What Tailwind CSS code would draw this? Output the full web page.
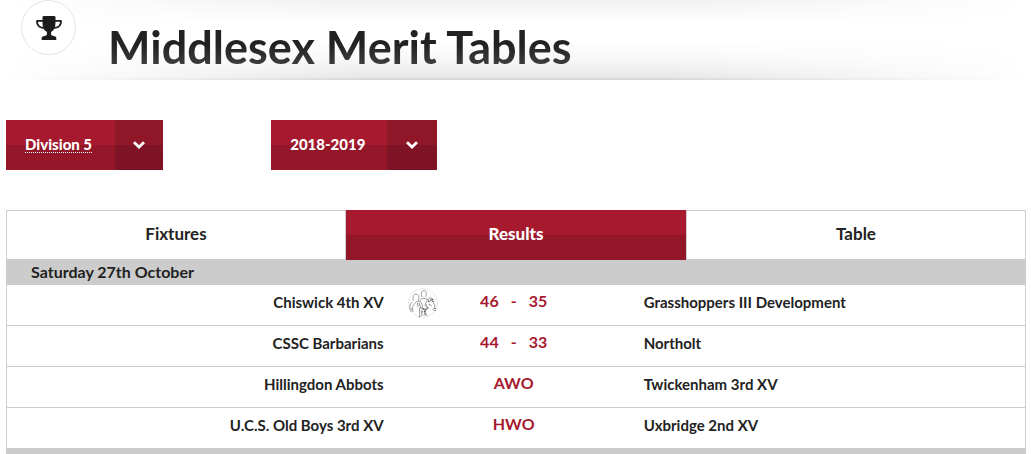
<!DOCTYPE html>
<html lang="en">
<head>
<meta charset="utf-8">
<meta name="viewport" content="width=device-width, initial-scale=1">
<title>Middlesex Merit Tables</title>
<script src="https://cdn.jsdelivr.net/npm/@tailwindcss/browser@4"></script>
</head>
<body class="overflow-x-hidden bg-white font-['Lato',sans-serif] font-bold text-[#222]">
<div class="pr-[5px] pl-[6px]">
  <header class="flex h-20 items-start bg-[linear-gradient(90deg,#fff,#fff0_35%,#fff0_65%,#fff),linear-gradient(0deg,#d4d4d4,#e8e8e8_3px,#ededed_8px,#f8f8f8_22px,#fff_38px,#fff_58px,#f0f0f0)] pl-[15px]">
    <span class="flex size-[55px] shrink-0 items-center justify-center rounded-full border border-[#e4e4e4] bg-white">
      <svg class="size-7" viewBox="0 0 28 28" fill="#1c1c1c" aria-hidden="true">
        <path d="M7.500 3Q7.500 2 9 2h10q1.500 0 1.500 1v3h5.200q1.200 0 1.200 1.200c0 4.500-2.800 7.200-7.500 7.500-.8 1.500-2.300 2.500-3.300 3.200v2.600q0 .9 1.800 1.300l2.400.6q1 .3 1 1.200V26H6.700v-2.400q0-.9 1-1.200l2.400-.6q1.800-.4 1.800-1.300v-2.600c-1-.7-2.500-1.700-3.300-3.200C3.900 14.400 1.100 11.700 1.100 7.200Q1.100 6 2.300 6h5.200zM2.900 7.700c.2 3 2 5 5.100 5.300-.4-1.700-.5-3.500-.5-5.300zM25.100 7.700h-4.600c0 1.800-.1 3.600-.5 5.300 3.100-.3 4.900-2.300 5.100-5.300z" fill-rule="evenodd"/>
      </svg>
    </span>
    <h1 class="bg-linear-to-b from-[#222] from-60% to-[#4a4a4a] bg-clip-text pt-5 pl-8 text-[45px] leading-[54px] whitespace-nowrap text-transparent">Middlesex Merit Tables</h1>
  </header>

  <form class="mt-10 flex text-[15px] text-white">
    <div class="w-[26%]">
      <label class="relative inline-flex h-[50px]">
        <span class="sr-only">Division</span>
        <select class="h-full w-[157px] appearance-none bg-[linear-gradient(#a6192e_50%,#941729_50%)] pr-12 pb-0.5 pl-[19px] font-black underline decoration-dotted decoration-1 underline-offset-2">
          <option>Division 5</option>
        </select>
        <span class="pointer-events-none absolute inset-y-0 right-0 flex w-12 items-center justify-center bg-[linear-gradient(#8f1727_50%,#7d1324_50%)]">
          <svg class="h-2 w-3" viewBox="0 0 12 8" fill="none" stroke="#fff" stroke-width="2.800" aria-hidden="true"><path d="M1 1.200l5 4.800 5-4.800"/></svg>
        </span>
      </label>
    </div>
    <label class="relative inline-flex h-[50px]">
      <span class="sr-only">Season</span>
      <select class="h-full w-[166px] appearance-none bg-[linear-gradient(#a6192e_50%,#941729_50%)] pr-12 pb-0.5 pl-[19px] font-black">
        <option>2018-2019</option>
      </select>
      <span class="pointer-events-none absolute inset-y-0 right-0 flex w-[50px] items-center justify-center bg-[linear-gradient(#8f1727_50%,#7d1324_50%)]">
        <svg class="h-2 w-3" viewBox="0 0 12 8" fill="none" stroke="#fff" stroke-width="2.800" aria-hidden="true"><path d="M1 1.200l5 4.800 5-4.800"/></svg>
      </span>
    </label>
  </form>

  <nav class="mt-10 grid grid-cols-3 text-[17px] leading-6">
    <button type="button" class="h-[50px] border border-[#ccc] pb-0.5">Fixtures</button>
    <button type="button" aria-current="page" class="h-[50px] bg-[linear-gradient(#a6192e_50%,#941729_50%)] pb-0.5 font-black text-white">Results</button>
    <button type="button" class="h-[50px] border border-[#ccc] pb-0.5">Table</button>
  </nav>

  <table class="w-full table-fixed border-separate border-spacing-0 border-x border-[#ccc] text-[15px] leading-5">
    <colgroup><col class="w-[37%]"><col class="w-[72px]"><col class="w-[116px]"><col></colgroup>
    <tbody>
      <tr class="h-[25px] bg-[#ccc]"><th colspan="4" scope="colgroup" class="pb-0.5 pl-6 text-left text-base leading-5">Saturday 27th October</th></tr>
      <tr class="h-[41px]">
        <td class="border-b border-[#ccc] pb-1.5 text-right">Chiswick 4th XV</td>
        <td class="border-b border-[#ccc] pb-1 pl-6">
          <svg class="size-[30px]" viewBox="0 0 30 30" fill="none" stroke="#777" stroke-width=".7" role="img" aria-label="Chiswick crest">
            <circle cx="15" cy="15" r="14.500" stroke="#ddd"/>
            <path d="M5.500 13c-1-3-.5-7 2.500-7s3.500 4 2 7M14 9c-1.500-3-.5-6.500 2-6.500s3 4 1.500 6.500M20 12.500c0-2 1-3 3-2.500l3 1.500M4 14c-2 2-2.500 5-2 8m2 0c0-3 2-6 4-8l4-1 2 3 1 6M12 12l3-2 4 1 3 3m-11 1l2 5m6-8l-2 5 3 4m2-10l3 2 2 6-2 3m-5-2l-2-4M3 20l2 2m-3 1h4m5-4c1 2 0 5 1 9m0-8l5 1 4-1m-8 2l1 6m3-7l-1 7m3-7l-2 3 2 4"/>
            <path stroke="#333" stroke-width="1" stroke-dasharray="1 1" d="M9 16h2.500M9.500 18l2-1M20 14l4-2M21 16l3 2M24 11l1 3M15 21l3 1M14 24l4-1M17 26h2M27 20v3M11 29l2-1"/>
          </svg>
        </td>
        <td class="border-b border-[#ccc] pb-2 text-center text-base leading-5 text-[#a6192e]"><span class="flex justify-center gap-3"><span>46</span><span>-</span><span>35</span></span></td>
        <td class="border-b border-[#ccc] pb-1.5 pl-18">Grasshoppers III Development</td>
      </tr>
      <tr class="h-[41px]">
        <td class="border-b border-[#ccc] pb-1.5 text-right">CSSC Barbarians</td>
        <td class="border-b border-[#ccc]"></td>
        <td class="border-b border-[#ccc] pb-2 text-center text-base leading-5 text-[#a6192e]"><span class="flex justify-center gap-3"><span>44</span><span>-</span><span>33</span></span></td>
        <td class="border-b border-[#ccc] pb-1.5 pl-18">Northolt</td>
      </tr>
      <tr class="h-[41px]">
        <td class="border-b border-[#ccc] pb-1.5 text-right">Hillingdon Abbots</td>
        <td class="border-b border-[#ccc]"></td>
        <td class="border-b border-[#ccc] pb-2 text-center text-base leading-5 text-[#a6192e]">AWO</td>
        <td class="border-b border-[#ccc] pb-1.5 pl-18">Twickenham 3rd XV</td>
      </tr>
      <tr class="h-[41px]">
        <td class="border-b border-[#ccc] pb-1.5 text-right">U.C.S. Old Boys 3rd XV</td>
        <td class="border-b border-[#ccc]"></td>
        <td class="border-b border-[#ccc] pb-2 text-center text-base leading-5 text-[#a6192e]">HWO</td>
        <td class="border-b border-[#ccc] pb-1.5 pl-18">Uxbridge 2nd XV</td>
      </tr>
      <tr class="h-[5px] bg-[#ccc]"><td colspan="4" class="p-0"></td></tr>
    </tbody>
  </table>
</div>
</body>
</html>
